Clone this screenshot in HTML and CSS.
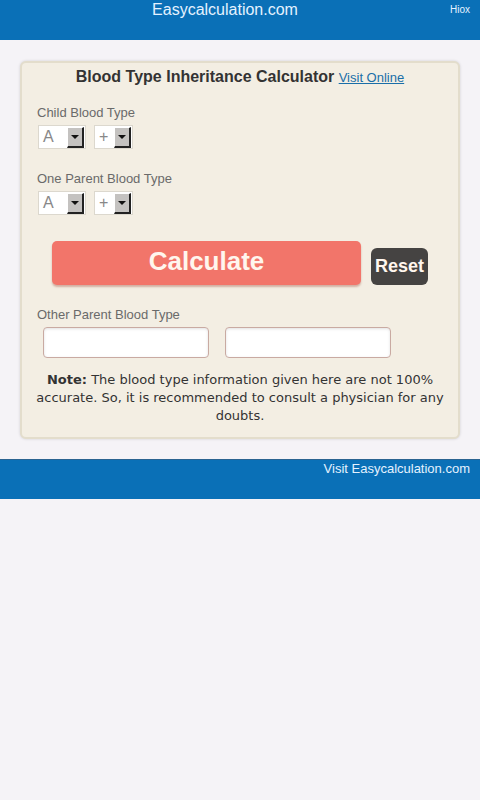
FILE: index.html
```html
<!DOCTYPE html>
<html lang="en">
<head>
    <meta charset="UTF-8">
    <meta name="viewport" content="width=device-width, initial-scale=1.0">
    <title>Blood Type Inheritance Calculator</title>
    <link rel="stylesheet" href="styles.css">
</head>
<body>
    <div class="topbar">
        <div class="site">Easycalculation.com</div>
        <div class="hiox">Hiox</div>
    </div>

    <div class="card">
        <div class="title">Blood Type Inheritance Calculator <a href="#">Visit Online</a></div>

        <div class="label first">Child Blood Type</div>
        <div class="selects">
            <div class="pick wide"><span class="val">A</span><span class="arrow"></span></div>
            <div class="pick"><span class="val">+</span><span class="arrow"></span></div>
        </div>

        <div class="label">One Parent Blood Type</div>
        <div class="selects">
            <div class="pick wide"><span class="val">A</span><span class="arrow"></span></div>
            <div class="pick"><span class="val">+</span><span class="arrow"></span></div>
        </div>

        <div class="buttons">
            <button class="calc">Calculate</button>
            <button class="reset">Reset</button>
        </div>

        <div class="label">Other Parent Blood Type</div>
        <div class="results">
            <input type="text" class="out">
            <input type="text" class="out">
        </div>

        <p class="note"><b>Note:</b> The blood type information given here are not 100% accurate. So, it is recommended to consult a physician for any doubts.</p>
    </div>

    <div class="footbar">Visit Easycalculation.com</div>
</body>
</html>
```

FILE: styles.css
```css
body {
    margin: 0;
    background: #f5f3f7;
    font-family: "Liberation Sans", Arial, sans-serif;
}
.topbar {
    display: flex;
    height: 40px;
    background: #0a70b7;
    color: #e4f2ff;
}
.site {
    flex: 1;
    text-align: center;
    font-size: 16px;
    line-height: 20px;
}
.hiox {
    width: 20px;
    padding-right: 10px;
    font-size: 10px;
    line-height: 20px;
    text-align: right;
}
.card {
    margin: 21px 20px 20px;
    background: #f3eee3;
    border: 2px solid #e3ddcc;
    border-radius: 6px;
    box-shadow: 0 0 3px rgba(0, 0, 0, 0.15);
    padding: 4px 15px 12px;
}
.title {
    text-align: center;
    font-size: 16px;
    font-weight: bold;
    line-height: 20px;
    color: #333;
}
.title a {
    font-size: 13px;
    font-weight: normal;
    color: #1a6ea8;
}
.label {
    margin-top: 22px;
    font-size: 13px;
    line-height: 16px;
    color: #6a6a6a;
}
.label.first {
    margin-top: 17px;
}
.selects {
    display: flex;
    gap: 8px;
    margin-top: 4px;
    padding-left: 1px;
}
.pick {
    position: relative;
    width: 39px;
    height: 24px;
    background: #fff;
    border: 1px solid #dcd8ce;
    box-sizing: border-box;
}
.pick.wide {
    width: 48px;
}
.val {
    display: block;
    padding-left: 4px;
    font-size: 16px;
    line-height: 22px;
    color: #888;
}
.arrow {
    position: absolute;
    right: 1px;
    top: 1px;
    width: 14px;
    height: 18px;
    background: #c4c2c0;
    border-left: 1px solid #fff;
    border-top: 1px solid #fff;
    border-right: 2px solid #222;
    border-bottom: 2px solid #222;
}
.arrow::after {
    content: "";
    position: absolute;
    left: 3px;
    top: 7px;
    border-left: 4px solid transparent;
    border-right: 4px solid transparent;
    border-top: 4px solid #111;
}
.buttons {
    display: flex;
    justify-content: center;
    align-items: flex-end;
    gap: 10px;
    margin-top: 26px;
}
button {
    border: none;
    color: #fff6ee;
    font-family: "Liberation Sans", Arial, sans-serif;
    font-weight: bold;
    cursor: pointer;
}
.calc {
    width: 309px;
    height: 44px;
    background: #f2756a;
    border-radius: 5px;
    font-size: 26px;
    padding-bottom: 4px;
    box-shadow: 0 2px 2px rgba(150, 60, 40, 0.35);
}
.reset {
    width: 57px;
    height: 37px;
    background: #454342;
    border-radius: 6px;
    font-size: 18px;
    padding: 0;
}
.results {
    display: flex;
    gap: 16px;
    margin-top: 4px;
    padding-left: 6px;
}
.out {
    width: 166px;
    height: 31px;
    box-sizing: border-box;
    margin: 0;
    border: 1px solid #c9aaa2;
    border-radius: 4px;
    background: #fff;
    box-shadow: inset 0 1px 3px rgba(0, 0, 0, 0.12);
}
.note {
    margin: 13px -5px 0;
    text-align: center;
    font-family: "DejaVu Sans", sans-serif;
    font-size: 13px;
    line-height: 18px;
    color: #333;
}
.footbar {
    height: 38px;
    background: #0a70b7;
    border-top: 1px solid #2a6390;
    color: #e4f2ff;
    font-size: 13px;
    line-height: 16px;
    padding: 1px 10px 0;
    text-align: right;
}
```
